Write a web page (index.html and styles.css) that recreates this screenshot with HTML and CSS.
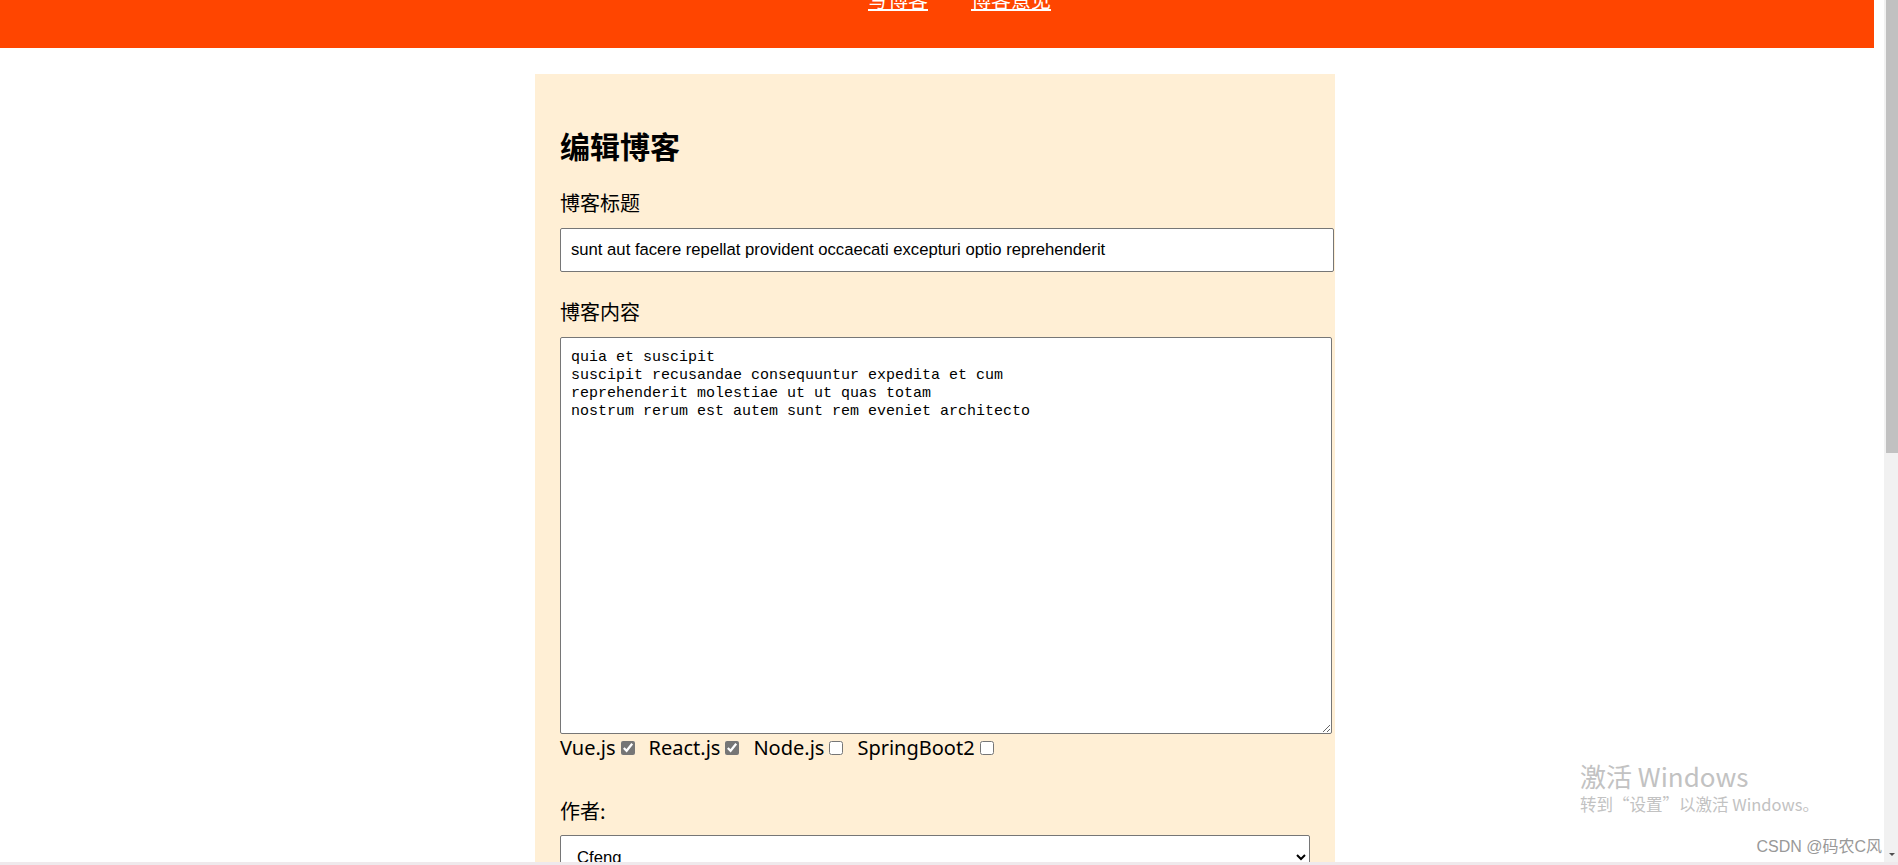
FILE: index.html
```html
<html>

<head>
    <meta charset="utf-8">
    <link rel="stylesheet" href="styles.css">
</head>

<body>
    <div class="screen">
        <div class="page">
            <div class="viewport">
                <header class="topbar">
                    <nav class="nav">
                        <a href="#">写博客</a>
                        <a href="#">博客意见</a>
                    </nav>
                </header>
                <div class="wrap">
                    <form class="editor">
                        <h2>编辑博客</h2>
                        <label class="field-label">博客标题</label>
                        <input class="title-input" type="text" value="sunt aut facere repellat provident occaecati excepturi optio reprehenderit">
                        <label class="field-label content-label">博客内容</label>
                        <textarea class="content-box">quia et suscipit
suscipit recusandae consequuntur expedita et cum
reprehenderit molestiae ut ut quas totam
nostrum rerum est autem sunt rem eveniet architecto</textarea>
                        <div class="tags">
                            <label class="tag">Vue.js<input type="checkbox" checked></label>
                            <label class="tag">React.js<input type="checkbox" checked></label>
                            <label class="tag">Node.js<input type="checkbox"></label>
                            <label class="tag">SpringBoot2<input type="checkbox"></label>
                        </div>
                        <label class="field-label author-label">作者:</label>
                        <select class="author-select">
                            <option>Cfeng</option>
                            <option>Bing</option>
                        </select>
                    </form>
                </div>
            </div>
            <div class="scrollbar">
                <div class="thumb"></div>
                <span class="arrow"></span>
            </div>
        </div>
        <div class="bottom-strip"></div>
        <div class="watermark">
            <div class="wm-title">激活 Windows</div>
            <div class="wm-sub">转到“设置”以激活 Windows。</div>
        </div>
        <div class="csdn">CSDN @码农C风</div>
    </div>
</body>

</html>
```
FILE: styles.css
```css
html,
body {
    margin: 0;
    padding: 0;
}

body {
    font-family: "Noto Sans", "Noto Sans CJK SC", sans-serif;
    color: #000;
    background: #fff;
}

.screen {
    height: 100vh;
    display: flex;
    flex-direction: column;
    overflow: hidden;
}

.page {
    flex: 1;
    min-height: 0;
    display: flex;
}

.viewport {
    flex: 1;
    overflow: hidden;
}

/* top bar, page is scrolled so only its lower part shows */
.topbar {
    height: 48px;
    margin-right: 10px;
    background: #ff4500;
    overflow: hidden;
}

.nav {
    display: flex;
    gap: 43px;
    padding-left: 868px;
}

.nav a {
    color: #fff;
    font-size: 20px;
    line-height: 24px;
    margin-top: -12px;
    font-family: "Noto Sans CJK SC", sans-serif;
}

.wrap {
    padding: 26px 14px 0 0;
}

.editor {
    width: 750px;
    margin: 0 auto;
    padding: 51px 25px 40px;
    background: #ffefd5;
}

.editor h2 {
    margin: 0;
    font-size: 30px;
    line-height: 40px;
    font-weight: bold;
    font-family: "Noto Sans CJK SC", sans-serif;
}

.field-label {
    display: block;
    margin-top: 24px;
    font-size: 20px;
    line-height: 28px;
    font-family: "Noto Sans CJK SC", sans-serif;
}

.content-label {
    margin-top: 26px;
}

.author-label {
    margin-top: 35px;
}

.title-input {
    display: block;
    margin-top: 11px;
    width: 774px;
    height: 44px;
    box-sizing: border-box;
    padding: 0 10px;
    border: 1px solid #767676;
    border-radius: 2px;
    font-family: "Liberation Sans", Arial, sans-serif;
    font-size: 16.67px;
    color: #000;
    background: #fff;
}

.content-box {
    display: block;
    margin-top: 11px;
    width: 772px;
    height: 397px;
    box-sizing: border-box;
    padding: 11px 10px;
    border: 1px solid #767676;
    border-radius: 2px;
    font-family: "Liberation Mono", monospace;
    font-size: 15px;
    line-height: 18px;
    color: #000;
    background: #fff;
}

.tags {
    display: flex;
    gap: 14px;
    font-size: 20px;
    line-height: 28px;
}

.tag {
    display: inline-flex;
    align-items: center;
}

.tag input {
    width: 14px;
    height: 14px;
    margin: 0 0 0 5px;
    accent-color: #767676;
}

.author-select {
    display: block;
    margin-top: 10px;
    width: 750px;
    height: 44px;
    padding: 0 12px;
    border: 1px solid #767676;
    border-radius: 2px;
    font-family: "Liberation Sans", Arial, sans-serif;
    font-size: 16.67px;
    color: #000;
    background: #fff;
}

.scrollbar {
    width: 12px;
    padding-left: 2px;
    background: #f1f1f1;
    display: flex;
    flex-direction: column;
    justify-content: space-between;
    align-items: center;
}

.thumb {
    width: 12px;
    height: 453px;
    background: #c1c1c1;
}

.arrow {
    width: 0;
    height: 0;
    margin-bottom: 6px;
    border-left: 3px solid transparent;
    border-right: 3px solid transparent;
    border-top: 3px solid #505050;
}

.bottom-strip {
    height: 3px;
    background: #efe9ec;
}

.watermark {
    position: absolute;
    left: 1580px;
    top: 759px;
    color: #c2c2c2;
    font-family: "Noto Sans CJK SC", sans-serif;
}

.wm-title {
    font-size: 26px;
    line-height: 33px;
}

.wm-sub {
    font-size: 16.5px;
    line-height: 24px;
}

.csdn {
    position: absolute;
    right: 16px;
    top: 837px;
    font-family: "Liberation Sans", "Noto Sans CJK SC", sans-serif;
    font-size: 16px;
    line-height: 20px;
    color: #999;
}
```
